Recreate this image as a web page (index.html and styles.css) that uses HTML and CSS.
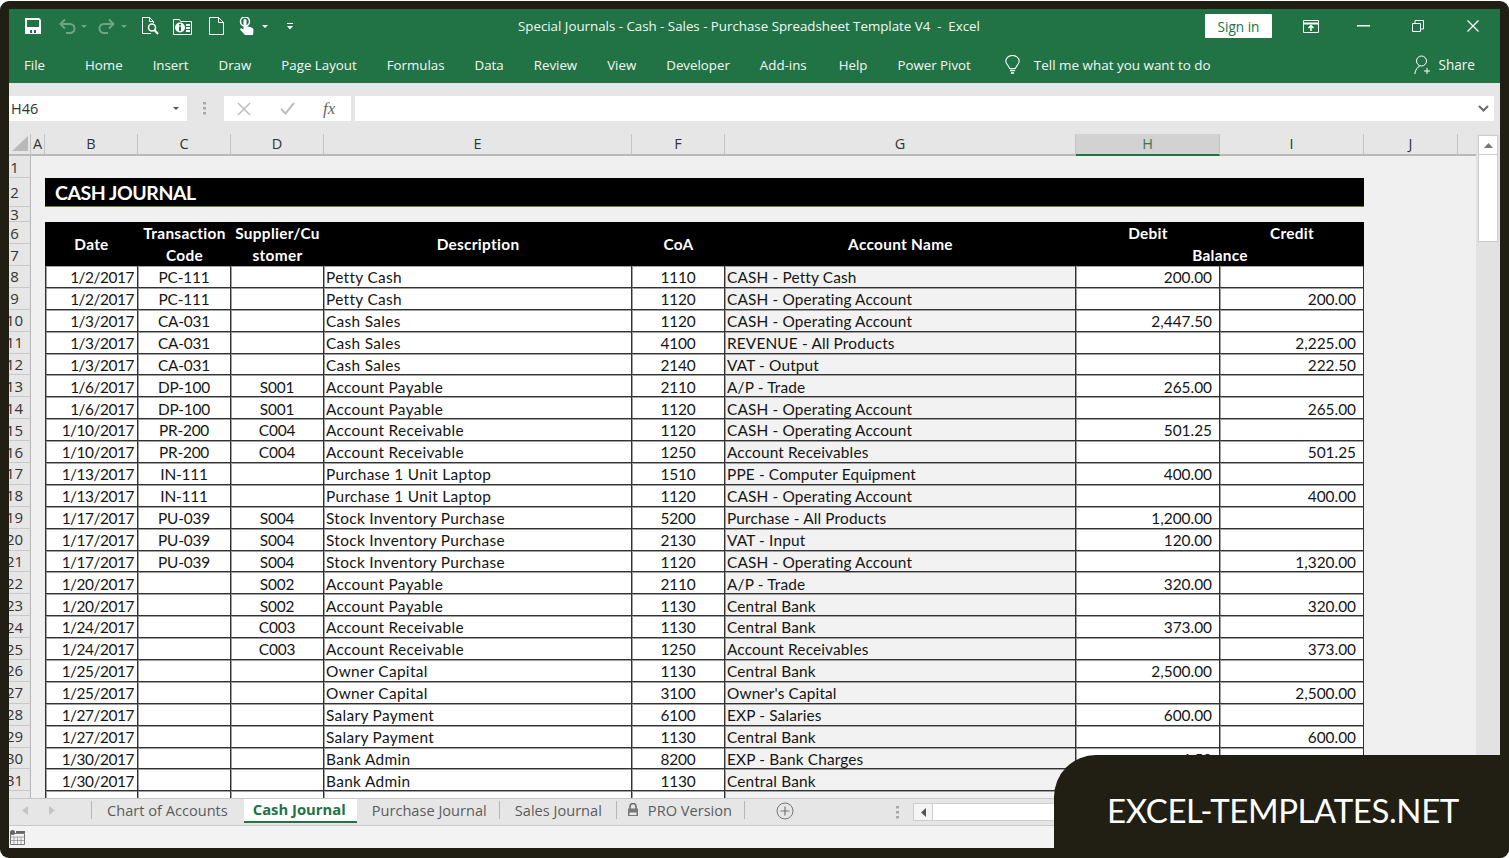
FILE: index.html
```html
<!DOCTYPE html>
<html lang="en">
<head>
<meta charset="utf-8">
<title>Special Journals - Cash - Sales - Purchase Spreadsheet Template V4 - Excel</title>
<link rel="stylesheet" href="styles.css">
</head>
<body>
<div class="window">
<div class="app">
  <header class="titlebar">
    <div class="qat">
      <svg class="q-save" width="16" height="16" viewBox="0 0 16 16"><path fill="#fff" d="M0 0h14l2 2v14H0z"/><path fill="#217346" d="M2 2h12v7H2z"/><path fill="#217346" d="M5 12h2v3H5zM9 12h2v3H9z"/></svg>
      <svg class="q-undo" width="18" height="16" viewBox="0 0 18 16" fill="none" stroke="#6ea588" stroke-width="2"><path d="M3 6h9a4.500 4.500 0 0 1 0 9H8"/><path d="M7 1.500 2.500 6 7 10.500"/></svg>
      <svg class="q-caret dim" width="6" height="3" viewBox="0 0 6 3"><path d="M0 0h6L3 3z"/></svg>
      <svg class="q-redo" width="18" height="16" viewBox="0 0 18 16" fill="none" stroke="#6ea588" stroke-width="2"><path d="M15 6H6a4.500 4.500 0 0 0 0 9h4"/><path d="M11 1.500 15.500 6 11 10.500"/></svg>
      <svg class="q-caret dim q-c2" width="6" height="3" viewBox="0 0 6 3"><path d="M0 0h6L3 3z"/></svg>
      <svg class="q-prev" width="17" height="18" viewBox="0 0 17 18" fill="none" stroke="#fff" stroke-width="1"><path d="M9 16.500H.500V.500h7l4 4V6"/><path d="M7.500.500v4h4"/><circle cx="10" cy="10.500" r="3.500" stroke-width="1.500"/><path d="M12.500 13l3.500 4" stroke-width="2"/></svg>
      <svg class="q-info" width="20" height="17" viewBox="0 0 20 17"><path fill="none" stroke="#fff" d="M.500 1.500h6l1 2h11v13H.500z"/><circle cx="7" cy="9.500" r="5" fill="#fff"/><path fill="#217346" d="M6 6h2v1.500H6zM6 8.500h2V13H6z"/><path fill="#fff" d="M13 6h4v2h-4zM13 9h4v2h-4zM13 12h4v2h-4z"/></svg>
      <svg class="q-new" width="15" height="18" viewBox="0 0 15 18" fill="none" stroke="#fff"><path d="M.500.500h9l5 5v12H.500z"/><path d="M9.500.500v5h5"/></svg>
      <svg class="q-touch" width="15" height="18" viewBox="0 0 15 18"><circle cx="6" cy="4.500" r="4.500" fill="none" stroke="#fff" stroke-width="1.500"/><path fill="#fff" d="M4.500 3.500a1.500 1.500 0 0 1 3 0V9l5 1.500q2 .7 2 2.500l-.5 5H6L1 12.500l1-1.500 2.500 1.500z"/></svg>
      <svg class="q-caret q-c3" width="6" height="3" viewBox="0 0 6 3"><path d="M0 0h6L3 3z"/></svg>
      <svg class="q-cust" width="6" height="7" viewBox="0 0 6 7" fill="#fff"><path d="M0 0h6v1H0zM0 3h6L3 6.500z"/></svg>
    </div>
    <div class="doc-title">Special Journals - Cash - Sales - Purchase Spreadsheet Template V4&nbsp; -&nbsp; Excel</div>
    <div class="win-ctrl">
      <button class="signin">Sign in</button>
      <span class="wc wc-first"><svg width="16" height="13" viewBox="0 0 16 13" fill="none" stroke="#fff"><path d="M.500.500h15v12H.500z"/><path d="M.500 3.500h15" stroke-width="2"/><path d="M8 11V6M5.500 8 8 5.500 10.500 8" stroke-width="1.500"/></svg></span>
      <span class="wc"><svg width="13" height="2" viewBox="0 0 13 2"><path fill="#fff" d="M0 0h13v1.500H0z"/></svg></span>
      <span class="wc"><svg width="12" height="12" viewBox="0 0 12 12" fill="none" stroke="#fff"><path d="M.500 3.500h8v8h-8z"/><path d="M3 3V.500h8.500V9H9"/></svg></span>
      <span class="wc"><svg width="12" height="12" viewBox="0 0 12 12" fill="none" stroke="#fff" stroke-width="1.300"><path d="M.500.500l11 11M11.500.500l-11 11"/></svg></span>
    </div>
  </header>

  <nav class="ribbon">
    <span class="rt file">File</span>
    <span class="rt">Home</span>
    <span class="rt">Insert</span>
    <span class="rt">Draw</span>
    <span class="rt">Page Layout</span>
    <span class="rt">Formulas</span>
    <span class="rt">Data</span>
    <span class="rt">Review</span>
    <span class="rt">View</span>
    <span class="rt">Developer</span>
    <span class="rt">Add-ins</span>
    <span class="rt help">Help</span>
    <span class="rt">Power Pivot</span>
    <svg class="bulb" width="15" height="20" viewBox="0 0 15 20" fill="none" stroke="#fff" stroke-width="1.100"><path d="M4.500 13.500C4 10.500.800 9.500.800 6.300a6.700 5.800 0 0 1 13.400 0c0 3.200-3.200 4.200-3.700 7.200z"/><path d="M5 15.500h5M6 18h3" stroke-width="1.500"/></svg>
    <span class="tell">Tell me what you want to do</span>
    <span class="share"><svg width="18" height="20" viewBox="0 0 18 20" fill="none" stroke="#fff"><circle cx="7.500" cy="6" r="5"/><path d="M.800 19c.5-4 2.500-7 5-7.800M13 13v6M10 16h6"/></svg>Share</span>
  </nav>

  <div class="fbar">
    <div class="namebox">H46<svg width="6" height="3" viewBox="0 0 6 3"><path fill="#555" d="M0 0h6L3 3z"/></svg></div>
    <svg class="fdots" width="3" height="13" viewBox="0 0 3 13" fill="#a8a8a8"><path d="M0 0h3v2.500H0zM0 5h3v2.500H0zM0 10h3v2.500H0z"/></svg>
    <div class="fbtns">
      <svg width="14" height="14" viewBox="0 0 14 14" fill="none" stroke="#bdbdbd" stroke-width="1.500"><path d="M1 1l12 12M13 1 1 13"/></svg>
      <svg width="15" height="13" viewBox="0 0 15 13" fill="none" stroke="#bdbdbd" stroke-width="2"><path d="M1 7l4.500 4.500L14 1"/></svg>
      <span class="fx">fx</span>
    </div>
    <div class="finput"><svg width="11" height="7" viewBox="0 0 11 7" fill="none" stroke="#6a6a6a" stroke-width="2"><path d="M1 1l4.500 4.500L10 1"/></svg></div>
  </div>

  <div class="work">
    <div class="sheet">
      <div class="corner"><i></i></div>
      <div class="ch chA">A</div><div class="ch">B</div><div class="ch">C</div><div class="ch">D</div><div class="ch">E</div><div class="ch">F</div><div class="ch">G</div><div class="ch sel">H</div><div class="ch">I</div><div class="ch">J</div><div class="ch last"></div>

      <div class="rh">1</div>
      <div class="rh">2</div><div class="title">CASH JOURNAL</div>
      <div class="rh">3</div>
      <div class="rh">6</div>
      <div class="hd b s2">Date</div><div class="hd s2 wrap">Transaction Code</div><div class="hd s2 wrap">Supplier/Cu<br>stomer</div><div class="hd s2">Description</div><div class="hd s2">CoA</div><div class="hd s2">Account Name</div><div class="hd">Debit</div><div class="hd">Credit</div>
      <div class="rh">7</div><div class="hd bal">Balance</div>

      <div class="rh">8</div><div class="c d">1/2/2017</div><div class="c m">PC-111</div><div class="c m"></div><div class="c t">Petty Cash</div><div class="c m">1110</div><div class="c t g">CASH - Petty Cash</div><div class="c n">200.00</div><div class="c n"></div>
      <div class="rh">9</div><div class="c d">1/2/2017</div><div class="c m">PC-111</div><div class="c m"></div><div class="c t">Petty Cash</div><div class="c m">1120</div><div class="c t g">CASH - Operating Account</div><div class="c n"></div><div class="c n">200.00</div>
      <div class="rh">10</div><div class="c d">1/3/2017</div><div class="c m">CA-031</div><div class="c m"></div><div class="c t">Cash Sales</div><div class="c m">1120</div><div class="c t g">CASH - Operating Account</div><div class="c n">2,447.50</div><div class="c n"></div>
      <div class="rh">11</div><div class="c d">1/3/2017</div><div class="c m">CA-031</div><div class="c m"></div><div class="c t">Cash Sales</div><div class="c m">4100</div><div class="c t g">REVENUE - All Products</div><div class="c n"></div><div class="c n">2,225.00</div>
      <div class="rh">12</div><div class="c d">1/3/2017</div><div class="c m">CA-031</div><div class="c m"></div><div class="c t">Cash Sales</div><div class="c m">2140</div><div class="c t g">VAT - Output</div><div class="c n"></div><div class="c n">222.50</div>
      <div class="rh">13</div><div class="c d">1/6/2017</div><div class="c m">DP-100</div><div class="c m">S001</div><div class="c t">Account Payable</div><div class="c m">2110</div><div class="c t g">A/P - Trade</div><div class="c n">265.00</div><div class="c n"></div>
      <div class="rh">14</div><div class="c d">1/6/2017</div><div class="c m">DP-100</div><div class="c m">S001</div><div class="c t">Account Payable</div><div class="c m">1120</div><div class="c t g">CASH - Operating Account</div><div class="c n"></div><div class="c n">265.00</div>
      <div class="rh">15</div><div class="c d">1/10/2017</div><div class="c m">PR-200</div><div class="c m">C004</div><div class="c t">Account Receivable</div><div class="c m">1120</div><div class="c t g">CASH - Operating Account</div><div class="c n">501.25</div><div class="c n"></div>
      <div class="rh">16</div><div class="c d">1/10/2017</div><div class="c m">PR-200</div><div class="c m">C004</div><div class="c t">Account Receivable</div><div class="c m">1250</div><div class="c t g">Account Receivables</div><div class="c n"></div><div class="c n">501.25</div>
      <div class="rh">17</div><div class="c d">1/13/2017</div><div class="c m">IN-111</div><div class="c m"></div><div class="c t">Purchase 1 Unit Laptop</div><div class="c m">1510</div><div class="c t g">PPE - Computer Equipment</div><div class="c n">400.00</div><div class="c n"></div>
      <div class="rh">18</div><div class="c d">1/13/2017</div><div class="c m">IN-111</div><div class="c m"></div><div class="c t">Purchase 1 Unit Laptop</div><div class="c m">1120</div><div class="c t g">CASH - Operating Account</div><div class="c n"></div><div class="c n">400.00</div>
      <div class="rh">19</div><div class="c d">1/17/2017</div><div class="c m">PU-039</div><div class="c m">S004</div><div class="c t">Stock Inventory Purchase</div><div class="c m">5200</div><div class="c t g">Purchase - All Products</div><div class="c n">1,200.00</div><div class="c n"></div>
      <div class="rh">20</div><div class="c d">1/17/2017</div><div class="c m">PU-039</div><div class="c m">S004</div><div class="c t">Stock Inventory Purchase</div><div class="c m">2130</div><div class="c t g">VAT - Input</div><div class="c n">120.00</div><div class="c n"></div>
      <div class="rh">21</div><div class="c d">1/17/2017</div><div class="c m">PU-039</div><div class="c m">S004</div><div class="c t">Stock Inventory Purchase</div><div class="c m">1120</div><div class="c t g">CASH - Operating Account</div><div class="c n"></div><div class="c n">1,320.00</div>
      <div class="rh">22</div><div class="c d">1/20/2017</div><div class="c m"></div><div class="c m">S002</div><div class="c t">Account Payable</div><div class="c m">2110</div><div class="c t g">A/P - Trade</div><div class="c n">320.00</div><div class="c n"></div>
      <div class="rh">23</div><div class="c d">1/20/2017</div><div class="c m"></div><div class="c m">S002</div><div class="c t">Account Payable</div><div class="c m">1130</div><div class="c t g">Central Bank</div><div class="c n"></div><div class="c n">320.00</div>
      <div class="rh">24</div><div class="c d">1/24/2017</div><div class="c m"></div><div class="c m">C003</div><div class="c t">Account Receivable</div><div class="c m">1130</div><div class="c t g">Central Bank</div><div class="c n">373.00</div><div class="c n"></div>
      <div class="rh">25</div><div class="c d">1/24/2017</div><div class="c m"></div><div class="c m">C003</div><div class="c t">Account Receivable</div><div class="c m">1250</div><div class="c t g">Account Receivables</div><div class="c n"></div><div class="c n">373.00</div>
      <div class="rh">26</div><div class="c d">1/25/2017</div><div class="c m"></div><div class="c m"></div><div class="c t">Owner Capital</div><div class="c m">1130</div><div class="c t g">Central Bank</div><div class="c n">2,500.00</div><div class="c n"></div>
      <div class="rh">27</div><div class="c d">1/25/2017</div><div class="c m"></div><div class="c m"></div><div class="c t">Owner Capital</div><div class="c m">3100</div><div class="c t g">Owner's Capital</div><div class="c n"></div><div class="c n">2,500.00</div>
      <div class="rh">28</div><div class="c d">1/27/2017</div><div class="c m"></div><div class="c m"></div><div class="c t">Salary Payment</div><div class="c m">6100</div><div class="c t g">EXP - Salaries</div><div class="c n">600.00</div><div class="c n"></div>
      <div class="rh">29</div><div class="c d">1/27/2017</div><div class="c m"></div><div class="c m"></div><div class="c t">Salary Payment</div><div class="c m">1130</div><div class="c t g">Central Bank</div><div class="c n"></div><div class="c n">600.00</div>
      <div class="rh">30</div><div class="c d">1/30/2017</div><div class="c m"></div><div class="c m"></div><div class="c t">Bank Admin</div><div class="c m">8200</div><div class="c t g">EXP - Bank Charges</div><div class="c n">4.50</div><div class="c n"></div>
      <div class="rh">31</div><div class="c d">1/30/2017</div><div class="c m"></div><div class="c m"></div><div class="c t">Bank Admin</div><div class="c m">1130</div><div class="c t g">Central Bank</div><div class="c n"></div><div class="c n"></div>
      <div class="rh">32</div><div class="c d">1/30/2017</div><div class="c m"></div><div class="c m"></div><div class="c t">Bank Interest</div><div class="c m">1130</div><div class="c t g">Central Bank</div><div class="c n"></div><div class="c n"></div>
    </div>
    <div class="vscroll">
      <div class="vbtn"><svg width="9" height="5" viewBox="0 0 9 5"><path fill="#777" d="M0 5 4.500 0 9 5z"/></svg></div>
      <div class="vthumb"></div>
    </div>
  </div>

  <div class="tabbar">
    <div class="tabnav">
      <svg width="6" height="9" viewBox="0 0 6 9"><path fill="#c4c4c4" d="M6 0v9L0 4.500z"/></svg>
      <svg width="6" height="9" viewBox="0 0 6 9"><path fill="#c4c4c4" d="M0 0v9l6-4.500z"/></svg>
    </div>
    <div class="tab chart">Chart of Accounts</div>
    <div class="tab active">Cash Journal</div>
    <div class="tab sep purchase">Purchase Journal</div>
    <div class="tab sep">Sales Journal</div>
    <div class="tab sep pro"><svg width="12" height="14" viewBox="0 0 12 14"><path fill="none" stroke="#666" stroke-width="1.500" d="M3 6V3.500a3 3 0 0 1 6 0V6"/><path fill="#777" d="M1 5.500h10V13H1z"/><path fill="#e6e6e6" d="M2.500 9.500h7V12h-7z"/></svg>PRO Version</div>
    <svg class="addsheet" width="18" height="18" viewBox="0 0 18 18" fill="none" stroke="#777"><circle cx="9" cy="9" r="8"/><path d="M9 4.500v9M4.500 9h9" stroke-width="1.200"/></svg>
    <svg class="tdots" width="3" height="13" viewBox="0 0 3 13" fill="#a8a8a8"><path d="M0 0h3v2.500H0zM0 5h3v2.500H0zM0 10h3v2.500H0z"/></svg>
    <div class="hscroll"><span class="hbtn"><svg width="5" height="9" viewBox="0 0 5 9"><path fill="#555" d="M5 0v9L0 4.500z"/></svg></span></div>
  </div>

  <footer class="status">
    <svg width="15" height="15" viewBox="0 0 15 15" fill="none" stroke="#777"><path d="M.500 3.500h14v11H.500z"/><path d="M.500 7h14M.500 10.500h14M4 7v7.500M7.500 7v7.500M11 7v7.500" stroke-width=".6"/><circle cx="2.500" cy="2.500" r="2.500" fill="#666" stroke="none"/><path fill="#666" stroke="none" d="M6 1h9v2H6z"/></svg>
  </footer>
</div>
<div class="brand">EXCEL-TEMPLATES.NET</div>
</div>
</body>
</html>
```
FILE: styles.css
```css
* { box-sizing: border-box; }
html, body { margin: 0; padding: 0; background: #fff; }
body { width: 1509px; height: 858px; overflow: hidden; font-family: "Open Sans", sans-serif; }
.window { position: relative; width: 1509px; height: 857px; margin-top: 1px; padding: 8px 9px 9px; background: #211e14; border-radius: 9px; overflow: hidden; }
.app { display: flex; flex-direction: column; width: 1491px; height: 839px; overflow: hidden; background: #e6e6e6; }

.titlebar { flex: none; display: flex; align-items: center; height: 39px; padding-bottom: 5px; background: #217346; color: #fff; }
.qat { flex: none; display: flex; align-items: center; width: 509px; padding-left: 16px; height: 100%; }
.qat svg { flex: none; }
.q-undo { margin-left: 17px; }
.q-caret { fill: #fff; }
.q-caret.dim { fill: #6ea588; margin-left: 5px; }
.q-redo { margin-left: 11px; }
.q-prev { margin-left: 15px; }
.q-info { margin-left: 14px; }
.q-new { margin-left: 16px; }
.q-touch { margin-left: 15px; }
.q-c3 { margin-left: 8px; }
.q-cust { margin-left: 19px; }
.doc-title { font-size: 13.300px; color: #f3f8f5; white-space: nowrap; }
.win-ctrl { margin-left: auto; display: flex; align-items: center; height: 100%; }
.signin { width: 67px; height: 24px; margin: 0 10px 0 0; padding: 0; border: 0; border-radius: 1px; background: #fff; color: #217346; font: 13.600px "Open Sans", sans-serif; }
.wc { width: 54.500px; display: flex; justify-content: center; align-items: center; }
.wc-first { padding-left: 3px; }

.ribbon { flex: none; display: flex; align-items: center; gap: 30px; height: 35px; padding-left: 15px; padding-bottom: 2px; background: #217346; color: #f3f8f5; font-size: 13.300px; white-space: nowrap; }
.rt.file { margin-right: 10px; }
.rt.help { margin-left: 2px; }
.bulb { margin-left: 4px; flex: none; }
.tell { margin-left: -16px; font-size: 13.450px; }
.share { margin-left: auto; margin-right: 25px; display: flex; align-items: center; gap: 6px; font-size: 13.600px; }

.fbar { flex: none; display: flex; align-items: center; height: 51px; padding: 0 6px 0 0; background: #e6e6e6; }
.namebox { display: flex; align-items: center; justify-content: space-between; width: 178px; height: 25px; padding: 0 8px 0 2px; background: #fff; font-size: 14.500px; color: #333; }
.fdots { margin: 0 18px 0 16px; flex: none; }
.fbtns { display: flex; align-items: center; width: 127px; height: 25px; padding-left: 13px; gap: 29px; background: #fff; }
.fx { margin-left: -1px; font: italic 17px "Liberation Serif", serif; color: #666; }
.finput { flex: 1; display: flex; align-items: center; justify-content: flex-end; height: 25px; margin-left: 4px; padding-right: 5px; background: #fff; }

.work { flex: none; display: flex; height: 664px; background: #e2e2e2; }
.sheet { flex: none; display: grid; width: 1467px; height: 664px; overflow: hidden;
  grid-template-columns: 22px 14px 93px 93px 93px 308px 93px 351px 144px 144px 94px 18px;
  grid-template-rows: 22px 22px 29px 15px 22px 22px repeat(25, 21.900px);
  background: #f0f0f0; font-family: Lato, sans-serif; font-size: 15.400px; color: #151515; }

.corner { display: flex; align-items: flex-end; padding: 0 0 3px 3px; background: #e6e6e6; border-bottom: 2px solid #b9b9b9; border-right: 1px solid #c4c4c4; }
.corner i { display: block; width: 16px; height: 15px; background: #b9b9b9; clip-path: polygon(100% 0, 100% 100%, 0 100%); }
.ch { display: flex; align-items: center; justify-content: center; padding-bottom: 2px; background: #e6e6e6; border-bottom: 2px solid #b9b9b9; border-right: 1px solid #c4c4c4; font: 14.500px "Open Sans", sans-serif; color: #333; }
.ch.sel { background: #d2d2d2; border-bottom-color: #217346; color: #3a7558; }
.ch.last { border-right: 0; }

.rh { grid-column: 1; margin-left: -10px; display: flex; align-items: center; justify-content: center; overflow: hidden; background: #e6e6e6; border-bottom: 1px solid #c8c8c8; border-right: 1px solid #b5b5b5; font: 15px "Open Sans", sans-serif; color: #333; }

.title { grid-column: 3 / 11; display: flex; align-items: center; padding-left: 10px; background: #000; border-bottom: 1px solid #71803f; color: #fff; font-weight: 700; font-size: 19.500px; letter-spacing: -.45px; }

.hd { display: flex; align-items: center; justify-content: center; text-align: center; background: #000; color: #fff; font-weight: 700; font-size: 15.400px; line-height: 22px; letter-spacing: .3px; }
.hd.b { grid-column: 3; }
.hd.s2 { grid-row: span 2; }
.hd.bal { grid-column: 9 / 11; }

.c { display: flex; align-items: center; padding-top: 1.600px; white-space: nowrap; overflow: hidden; background: #fff; border-bottom: 1px solid #333; border-right: 1px solid #333; box-shadow: inset 1px 1px 0 #a0a0a0; }
.d { grid-column: 3; justify-content: flex-end; padding-right: 3px; border-left: 1px solid #333; letter-spacing: -.45px; }
.m { justify-content: center; letter-spacing: -.2px; }
.t { padding-left: 2px; letter-spacing: .33px; }
.t.g { background: #f2f2f2; letter-spacing: .15px; }
.n { justify-content: flex-end; padding-right: 7px; }

.vscroll { flex: none; width: 20px; margin-left: 2px; }
.vbtn { display: flex; align-items: center; justify-content: center; height: 20px; margin-top: 1px; background: #fff; border: 1px solid #cdcdcd; }
.vthumb { height: 87px; background: #fff; border: 1px solid #cdcdcd; border-top: 0; }

.tabbar { flex: none; display: flex; align-items: stretch; height: 28px; background: #e6e6e6; border-top: 1px solid #c8c8c8; border-bottom: 1px solid #c8c8c8; font-size: 14.600px; color: #5c5c5c; white-space: nowrap; }
.tabnav { flex: none; display: flex; align-items: center; gap: 21px; width: 83px; padding-left: 13px; border-right: 1px solid #b5b5b5; margin: 2px 0 6px; }
.tab { flex: none; display: flex; align-items: center; padding: 0 15px 4px; position: relative; }
.tab.chart { padding-right: 16px; }
.tab.active { padding: 0 11px 2px 9px; height: 24px; background: #fff; border-bottom: 2px solid #217346; color: #217346; font-weight: 700; font-size: 14.800px; }
.tab.purchase { padding-right: 13px; }
.tab.sep::after { content: ""; position: absolute; right: 0; top: 2px; bottom: 6px; width: 1px; background: #b5b5b5; }
.tab.pro { gap: 9px; padding-left: 10px; padding-right: 13px; }
.addsheet { flex: none; align-self: center; margin: 0 0 0 31px; position: relative; top: -1px; }
.tdots { flex: none; align-self: center; margin-left: 102px; }
.hscroll { flex: none; align-self: center; display: flex; width: 200px; height: 18px; margin-left: 14px; background: #fff; border: 1px solid #cdcdcd; }
.hbtn { display: flex; align-items: center; justify-content: center; width: 19px; border-right: 1px solid #cdcdcd; background: #f5f5f5; }

.status { flex: 1; display: flex; align-items: center; padding-left: 1px; background: #f3f3f3; }

.brand { position: absolute; left: 1054px; top: 754px; right: 0; bottom: 0; display: flex; align-items: center; justify-content: center; padding: 6px 0 0 3px; background: #211e14; border-top-left-radius: 42px; color: #fff; font-family: Lato, sans-serif; font-size: 33px; letter-spacing: -.4px; white-space: nowrap; }
```
